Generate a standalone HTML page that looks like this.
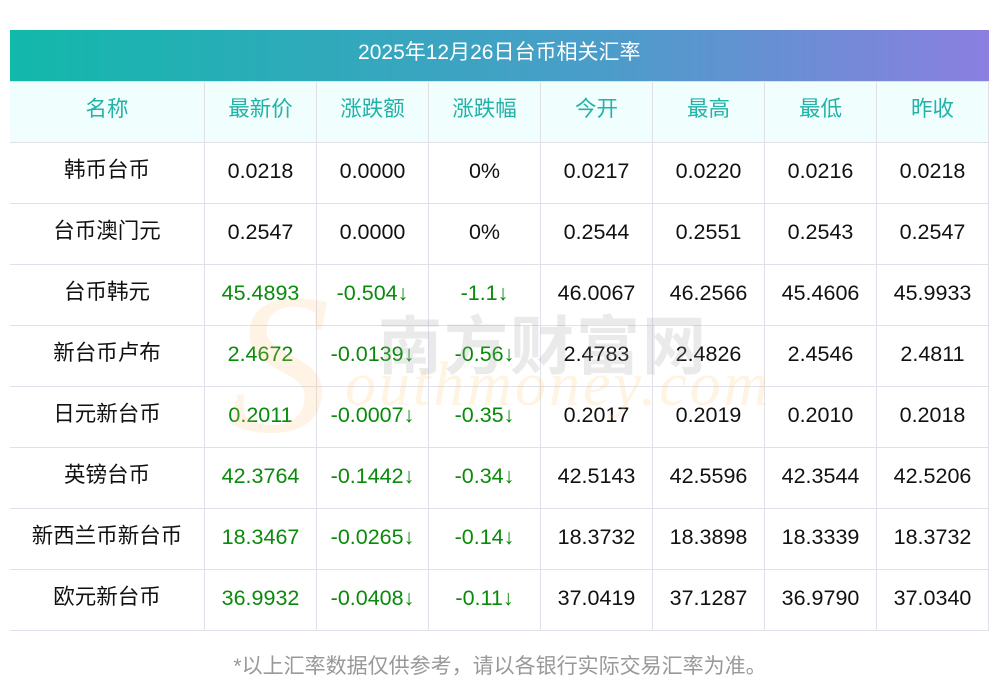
<!DOCTYPE html><html><head><meta charset="utf-8"><style>
body{margin:0;width:1000px;height:697px;background:#fff;font-family:"Liberation Sans","Noto Sans CJK SC",sans-serif;position:relative;overflow:hidden}
.t{position:absolute;left:10px;top:30px;width:979px;border-collapse:collapse}
.title{height:51px;background:linear-gradient(90deg,#12b8ab,#4a9dc9 60%,#8b7fe0);color:#fff;font-size:21px;text-align:center}
td{border:1px solid #dfe0ea;text-align:center;font-size:21.5px;height:60px;padding:0;color:#111}
td span{position:relative;top:-2px}
td b{font-weight:normal;position:relative;top:-5px}
tr td:first-child{border-left:none}
.h td{background:#f0fefe;color:#22b3a8}
.g{color:#0a8a0a}
.ft{position:absolute;top:650px;left:0;width:1000px;text-align:center;color:#999;font-size:21px}
.wm1{position:absolute;left:378px;top:296px;font-size:64px;color:rgba(160,160,160,.22);letter-spacing:2px;font-family:"Noto Sans CJK SC",sans-serif;font-weight:bold;z-index:2}
.wm2{position:absolute;left:345px;top:350px;font-size:62px;color:rgba(255,200,120,.22);font-style:italic;font-family:"Liberation Serif",serif;letter-spacing:3px;z-index:2}
.wm3{position:absolute;left:230px;top:265px;font-size:200px;color:rgba(255,190,110,.18);font-style:italic;font-family:"Liberation Serif",serif;z-index:2;line-height:1}
</style></head><body>
<table class="t">
<tr><td class="title" colspan="8" style="border:none;height:51px;color:#fff"><b>2025年12月26日台币相关汇率</b></td></tr>
<tr class="h"><td style="width:194px"><b>名称</b></td><td style="width:111px"><b>最新价</b></td><td style="width:111px"><b>涨跌额</b></td><td style="width:111px"><b>涨跌幅</b></td><td style="width:111px"><b>今开</b></td><td style="width:111px"><b>最高</b></td><td style="width:111px"><b>最低</b></td><td><b>昨收</b></td></tr>
<tr><td><b>韩币台币</b></td><td><span>0.0218</span></td><td><span>0.0000</span></td><td><span>0%</span></td><td><span>0.0217</span></td><td><span>0.0220</span></td><td><span>0.0216</span></td><td><span>0.0218</span></td></tr>
<tr><td><b>台币澳门元</b></td><td><span>0.2547</span></td><td><span>0.0000</span></td><td><span>0%</span></td><td><span>0.2544</span></td><td><span>0.2551</span></td><td><span>0.2543</span></td><td><span>0.2547</span></td></tr>
<tr><td><b>台币韩元</b></td><td class="g"><span>45.4893</span></td><td class="g"><span>-0.504↓</span></td><td class="g"><span>-1.1↓</span></td><td><span>46.0067</span></td><td><span>46.2566</span></td><td><span>45.4606</span></td><td><span>45.9933</span></td></tr>
<tr><td><b>新台币卢布</b></td><td class="g"><span>2.4672</span></td><td class="g"><span>-0.0139↓</span></td><td class="g"><span>-0.56↓</span></td><td><span>2.4783</span></td><td><span>2.4826</span></td><td><span>2.4546</span></td><td><span>2.4811</span></td></tr>
<tr><td><b>日元新台币</b></td><td class="g"><span>0.2011</span></td><td class="g"><span>-0.0007↓</span></td><td class="g"><span>-0.35↓</span></td><td><span>0.2017</span></td><td><span>0.2019</span></td><td><span>0.2010</span></td><td><span>0.2018</span></td></tr>
<tr><td><b>英镑台币</b></td><td class="g"><span>42.3764</span></td><td class="g"><span>-0.1442↓</span></td><td class="g"><span>-0.34↓</span></td><td><span>42.5143</span></td><td><span>42.5596</span></td><td><span>42.3544</span></td><td><span>42.5206</span></td></tr>
<tr><td><b>新西兰币新台币</b></td><td class="g"><span>18.3467</span></td><td class="g"><span>-0.0265↓</span></td><td class="g"><span>-0.14↓</span></td><td><span>18.3732</span></td><td><span>18.3898</span></td><td><span>18.3339</span></td><td><span>18.3732</span></td></tr>
<tr><td><b>欧元新台币</b></td><td class="g"><span>36.9932</span></td><td class="g"><span>-0.0408↓</span></td><td class="g"><span>-0.11↓</span></td><td><span>37.0419</span></td><td><span>37.1287</span></td><td><span>36.9790</span></td><td><span>37.0340</span></td></tr>
</table>
<div class="wm3">S</div>
<div class="wm1">南方财富网</div>
<div class="wm2">outhmoney.com</div>
<div class="ft">*以上汇率数据仅供参考，请以各银行实际交易汇率为准。</div>
</body></html>
